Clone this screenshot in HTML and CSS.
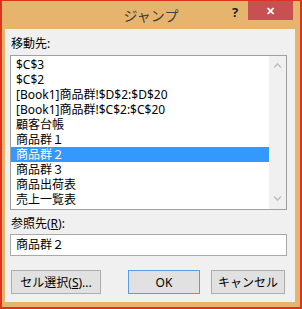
FILE: index.html
```html
<!DOCTYPE html>
<html lang="ja">
<head>
    <meta charset="UTF-8">
    <title>ジャンプ</title>
    <link rel="stylesheet" href="styles.css">
</head>
<body>
    <div class="window">
        <div class="titlebar">
            <span class="title">ジャンプ</span>
            <span class="help">?</span>
            <span class="close">✕</span>
        </div>
        <div class="panel">
            <div class="label">移動先:</div>
            <div class="listbox">
                <ul class="items">
                    <li>$C$3</li>
                    <li>$C$2</li>
                    <li>[Book1]商品群!$D$2:$D$20</li>
                    <li>[Book1]商品群!$C$2:$C$20</li>
                    <li>顧客台帳</li>
                    <li>商品群１</li>
                    <li class="selected">商品群２</li>
                    <li>商品群３</li>
                    <li>商品出荷表</li>
                    <li>売上一覧表</li>
                </ul>
                <div class="scrollbar">
                    <svg width="17" height="10" viewBox="0 0 17 10"><path d="M5 6.5 L8.5 3 L12 6.5" fill="none" stroke="#c2c2c2" stroke-width="1.6"/></svg>
                    <svg width="17" height="10" viewBox="0 0 17 10"><path d="M5 3.5 L8.5 7 L12 3.5" fill="none" stroke="#c2c2c2" stroke-width="1.6"/></svg>
                </div>
            </div>
            <div class="label second">参照先(<u>R</u>):</div>
            <div class="textbox">商品群２</div>
            <div class="buttons">
                <button class="btn select">セル選択(<u>S</u>)...</button>
                <button class="btn ok">OK</button>
                <button class="btn cancel">キャンセル</button>
            </div>
        </div>
    </div>
</body>
</html>
```

FILE: styles.css
```css
body {
    margin: 0;
    font-family: "Noto Sans", "Noto Sans CJK JP", sans-serif;
    font-size: 12px;
    color: #000;
}

.window {
    width: 302px;
    height: 309px;
    box-sizing: border-box;
    background: #e6b46d;
    border: 2px solid #e0301e;
    border-top-width: 1px;
    padding: 0 5px 5px 3px;
    display: flex;
    flex-direction: column;
}

.titlebar {
    height: 28px;
    position: relative;
    display: flex;
    justify-content: center;
    align-items: center;
    margin-left: -3px;
    margin-right: -5px;
}

.title {
    font-size: 14px;
    color: #404040;
}

.help {
    position: absolute;
    left: 230px;
    top: 2px;
    font-size: 13px;
    font-weight: bold;
    color: #222;
}

.close {
    position: absolute;
    left: 246px;
    top: 0;
    width: 45px;
    height: 19px;
    background: #c75050;
    color: #fff;
    font-size: 11px;
    font-weight: bold;
    display: flex;
    align-items: center;
    justify-content: center;
}

.panel {
    flex: 1;
    background: #f0f0f0;
    padding: 7px 0 0 5px;
    display: flex;
    flex-direction: column;
}

.label {
    line-height: 15px;
    margin-left: 1px;
    margin-bottom: 4px;
}

.label.second {
    margin-top: 6px;
    margin-bottom: 3px;
}

.listbox {
    width: 277px;
    height: 155px;
    box-sizing: border-box;
    border: 1px solid #a0a0a0;
    background: #fff;
    display: flex;
}

.items {
    list-style: none;
    margin: 0;
    padding: 1px 0 0 0;
    flex: 1;
}

.items li {
    height: 15px;
    line-height: 15px;
    padding-left: 5px;
    white-space: nowrap;
}

.items li.selected {
    background: #3399ff;
    color: #fff;
}

.scrollbar {
    width: 17px;
    background: #f0f0f0;
    display: flex;
    flex-direction: column;
    justify-content: space-between;
    padding: 5px 0 6px;
}

.textbox {
    width: 277px;
    height: 22px;
    box-sizing: border-box;
    border: 1px solid #a9a9a9;
    background: #fff;
    line-height: 20px;
    padding-left: 5px;
}

.buttons {
    display: flex;
    margin-top: 14px;
    margin-left: 1px;
}

.btn {
    height: 24px;
    font-family: inherit;
    font-size: 12px;
    color: #000;
    background: #e1e1e1;
    border: 1px solid #adadad;
    padding: 0;
}

.btn.select {
    width: 90px;
}

.btn.ok {
    width: 72px;
    margin-left: 27px;
    border-color: #5b9de0;
}

.btn.cancel {
    width: 74px;
    margin-left: 11px;
}
```
